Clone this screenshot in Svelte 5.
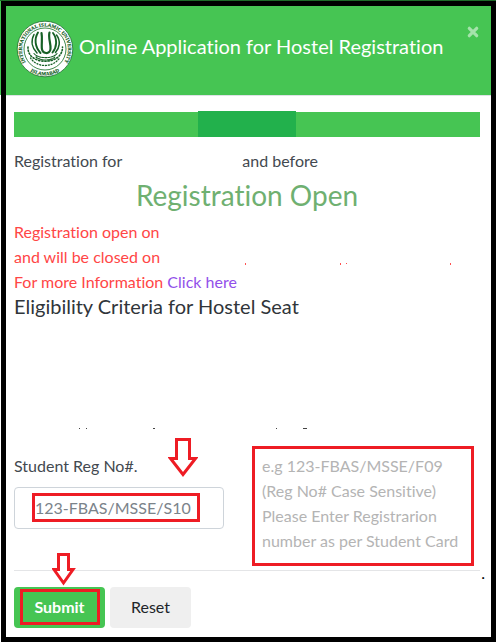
<script>
  let regNo = $state('123-FBAS/MSSE/S10');
</script>

<div class="page">
<div class="dialog">
  <header>
    <svg class="logo" viewBox="0 0 58 58" role="img" aria-label="International Islamic University Islamabad">
      <defs>
        <path id="arc-top" d="M12.8 45.8 A23 23 0 1 1 45.2 45.8" />
        <path id="arc-bottom" d="M10 47.500 A26.500 26.500 0 0 0 48 47.500" />
      </defs>
      <circle cx="29" cy="29" r="27.8" fill="#fff" stroke="#1c6b2c" stroke-width=".8" />
      <circle cx="29" cy="29" r="21" fill="#fff" stroke="#2a7a38" stroke-width=".9" />
      <text class="seal"><textPath href="#arc-top" startOffset="50%" text-anchor="middle">INTERNATIONAL ISLAMIC UNIVERSITY</textPath></text>
      <text class="seal"><textPath href="#arc-bottom" startOffset="50%" text-anchor="middle">ISLAMABAD</textPath></text>
      <g fill="none" stroke="#176126" stroke-linecap="round">
        <path stroke-width="2.2" d="M25.500 13 C26.500 18 25.500 22 25.800 28 C26 34 34 35 34.500 29 C35 23 32 18 33.500 12.500" />
        <path stroke-width="1.9" d="M22 12.500 C18 19 19 27 24.500 33 M37 13 C41.500 19 41 27 36.500 32.500" />
        <path stroke-width="1.5" d="M18 14.500 C14.500 21 16 28 21 33 M40.500 15 C45 21 43.500 28 39.500 32.500" />
        <path stroke-width="1.1" stroke-dasharray="2 1" d="M18 33.500 C22 39 37 39 41 33.500 M20 37 C24 41 35 41 39 37" />
        <path stroke-width="1.6" stroke-dasharray="1.200 1.900" d="M12 27 C11 46 47 46 46.500 27" />
        <path stroke-width="1.300" stroke-dasharray="1 1.900" d="M14.500 38 C21 48 37 48 43.500 38" />
      </g>
    </svg>
    <h1>Online Application for Hostel Registration</h1>
    <button class="close" type="button" aria-label="Close">
      <svg viewBox="0 0 12 12" aria-hidden="true"><path d="M2.300 2.300 L9.700 9.700 M9.700 2.300 L2.300 9.700" /></svg>
    </button>
  </header>

  <main>
    <div class="band"><span></span></div>

    <p class="intro"><span>Registration for</span><span>and before</span></p>
    <h2>Registration Open</h2>
    <div class="notice">
      <p>Registration open on</p>
      <p class="closing">and will be closed on
        <svg class="marks" viewBox="0 0 216 4" aria-hidden="true"><path d="M1 1h1v2h-1z M96 1h1v2h-1z M102 1h1v1h-1z M206 1h1v2h-1z" /></svg>
      </p>
      <p>For more Information <a href="#info">Click here</a></p>
    </div>
    <h3>Eligibility Criteria for Hostel Seat</h3>
    <div class="criteria">
      <svg viewBox="0 0 232 2" aria-hidden="true"><path d="M1 0h1v1h-1z M8 0h1v1h-1z M75 0h2v1h-2z M198 0h1v1h-1z M225 0h4v1h-4z" /></svg>
    </div>

    <form onsubmit={(e) => e.preventDefault()}>
      <div class="fields">
        <div class="field">
          <label for="reg-no">Student Reg No#.</label>
          <div class="entry">
            <input id="reg-no" type="text" bind:value={regNo} />
            <span class="frame"></span>
          </div>
          <svg class="arrow big" viewBox="0 0 30 40" aria-hidden="true"><path d="M8.500 1.500 H21.500 V20.500 H27.500 L15 36.500 L2.500 20.500 H8.500 Z" /></svg>
        </div>
        <p class="hint">e.g 123-FBAS/MSSE/F09<br />(Reg No# Case Sensitive)<br />Please Enter Registrarion<br />number as per Student Card</p>
      </div>
      <div class="rule"><span>.</span></div>
      <div class="actions">
        <button class="submit" type="submit">Submit<span class="frame"></span></button>
        <button class="reset" type="reset">Reset</button>
        <svg class="arrow small" viewBox="0 0 24 34" aria-hidden="true"><path d="M6.500 1.500 H16.500 V16.500 H21 L11.500 30 L2 16.500 H6.500 Z" /></svg>
      </div>
    </form>
  </main>
</div>
</div>

<style>
  :global(body) { background: #fff; }
  * { box-sizing: border-box; }
  .page {
    padding: 1px 0 0 1px;
    background: linear-gradient(#1d6b28 1px, #46c553 1px, #46c553 95px, #fff 95px);
  }
  .dialog {
    border: 5px solid #000;
    background: #fff;
    color: #434950;
    font: 16px/25px Lato, 'Open Sans', sans-serif;
    font-variant-ligatures: none;
  }
  h1, h2, h3, p { margin: 0; font-weight: 400; }
  header {
    display: flex;
    align-items: flex-start;
    gap: 5px;
    height: 90px;
    padding: 14px 12px 0 10px;
    background: #46c553;
    border-bottom: 1px solid #dee2e6;
  }
  .logo { width: 58px; height: 58px; flex: none; }
  .seal { font: 700 5px 'Liberation Serif', serif; fill: #0f5a20; stroke: #0f5a20; stroke-width: .15; }
  h1 { flex: 1; padding-top: 14px; font-size: 20px; line-height: 24px; color: #fff; white-space: nowrap; }
  .close { margin-top: 6px; padding: 0; border: 0; background: none; line-height: 0; }
  .close svg { width: 12px; height: 12px; }
  .close path { stroke: #a5e3ab; stroke-width: 3.2; stroke-linecap: round; }
  main { padding: 15px 11px 9px 8px; }
  .band { display: flex; justify-content: center; height: 26px; background: linear-gradient(#fff 1px, #46c553 1px); }
  .band span { width: 21%; background: #22b14c; }
  .intro { display: flex; margin-top: 11px; }
  .intro span:first-child { flex: 0 0 49%; }
  h2 { margin-top: 2px; font-size: 28px; line-height: 40px; text-align: center; color: #6fb071; }
  .notice { margin-top: 4px; color: #ff4646; }
  .closing { display: flex; align-items: flex-end; justify-content: space-between; }
  .marks { width: 216px; height: 4px; margin-right: 20px; margin-bottom: 3px; fill: #ff5050; }
  a { color: #9250ea; text-decoration: none; }
  h3 { font-size: 20px; line-height: 24px; color: #30353a; }
  .criteria { display: flex; align-items: flex-end; height: 135px; padding: 0 0 23px 64px; }
  .criteria svg { width: 232px; height: 2px; fill: #444; }
  .fields { display: flex; justify-content: space-between; align-items: flex-start; padding-right: 6px; margin-top: -7px; }
  .field { position: relative; width: 210px; padding-top: 7px; }
  label { display: block; }
  .entry { position: relative; margin-top: 9px; }
  input {
    display: block;
    width: 100%;
    height: 42px;
    padding: 0 20px 2px;
    border: 1px solid #ced4da;
    border-radius: 4px;
    background: #fff;
    color: #7b838a;
    font: inherit;
  }
  .frame { position: absolute; border: 3px solid #ee1c24; pointer-events: none; }
  .entry .frame { inset: 6px 24px 7px 18px; }
  .hint { width: 222px; height: 120px; padding: 4px 7px; border: 3px solid #ee1c24; color: #b4b4b4; white-space: nowrap; }
  .rule { display: flex; justify-content: flex-end; height: 17px; margin-top: 4px; border-top: 1px solid #e4e5e7; }
  .rule span { margin-right: -5px; line-height: 4px; color: #000; }
  .actions { position: relative; display: flex; gap: 5px; }
  .actions button { position: relative; height: 41px; padding: 0 20px 2px; border: 0; border-radius: 4px; font: inherit; }
  .actions .submit { width: 91px; background: #46c553; color: #fff; font-weight: 700; }
  .submit .frame { inset: 2px 5px 3px 6px; }
  .actions .reset { width: 81px; background: #efefef; color: #212529; }
  .arrow { position: absolute; fill: #fff; stroke: #ee1c24; stroke-width: 3; }
  .big { left: 154px; top: -8px; width: 30px; height: 40px; }
  .small { left: 38px; top: -34px; width: 24px; height: 34px; }
</style>
